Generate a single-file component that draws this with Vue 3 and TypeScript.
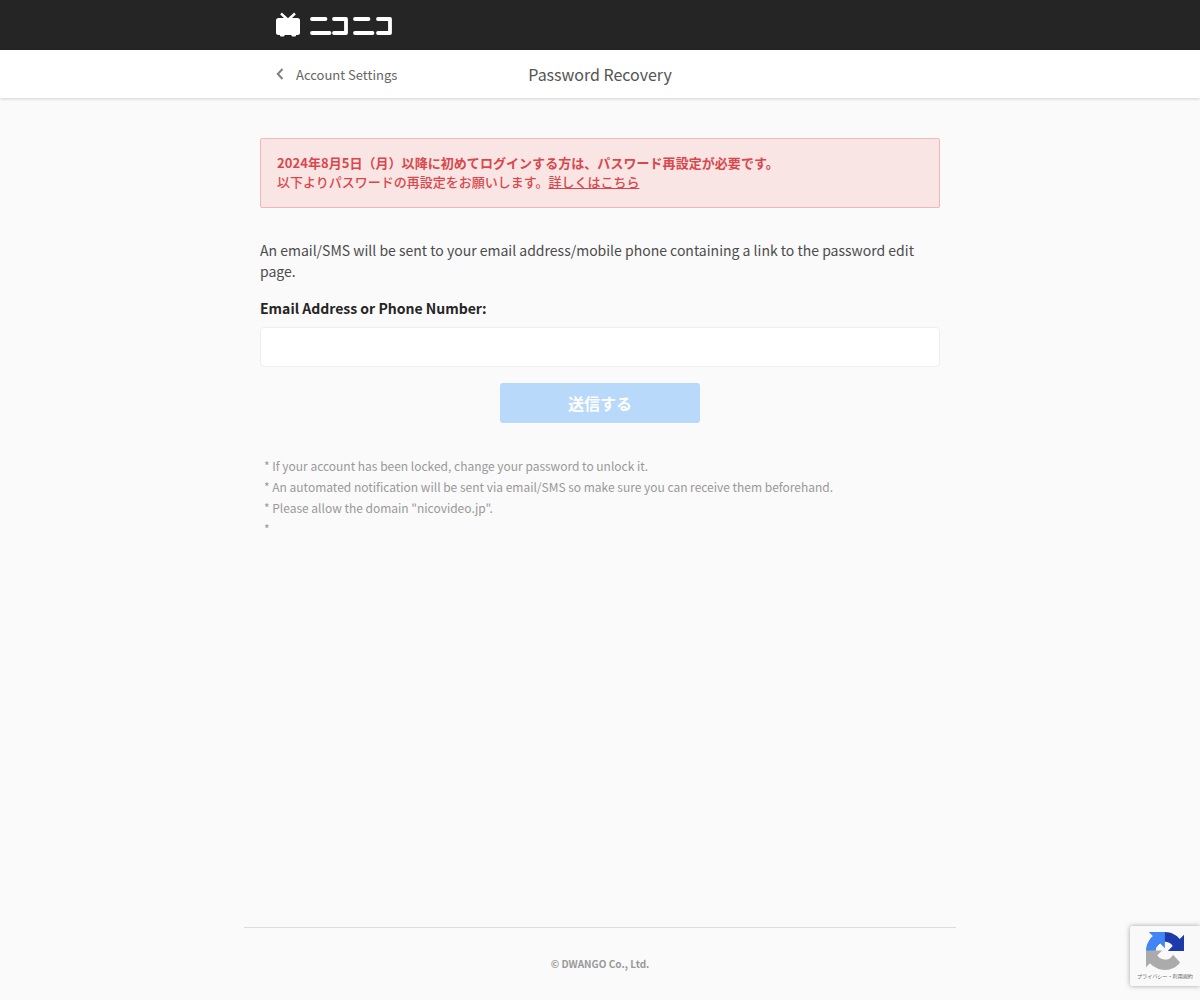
<script setup lang="ts">
const notes: string[] = [
  '* If your account has been locked, change your password to unlock it.',
  '* An automated notification will be sent via email/SMS so make sure you can receive them beforehand.',
  '* Please allow the domain "nicovideo.jp".',
  '*',
]
</script>

<template>
  <div class="page">
    <header class="top">
      <div class="top-inner">
        <svg class="logo" width="118" height="26" viewBox="0 0 118 26" aria-label="niconico">
          <path d="M5 1.5 L11.5 7.5 M19 1.5 L12.5 7.5" stroke="#fff" stroke-width="2.4" fill="none" />
          <rect x="0" y="6" width="24" height="17" rx="2.5" fill="#fff" />
          <rect x="4" y="22" width="4.5" height="2.6" rx="1" fill="#fff" />
          <rect x="15.5" y="22" width="4.5" height="2.6" rx="1" fill="#fff" />
          <g stroke="#fff" stroke-width="3.8" fill="none" stroke-linecap="round" stroke-linejoin="round">
            <path d="M36 7 H49.5 M36 21 H53.5" />
            <path d="M58 7 H70 V21 H58" />
            <path d="M79 7 H92.5 M79 21 H96.5" />
            <path d="M102 7 H114 V21 H102" />
          </g>
        </svg>
      </div>
    </header>

    <nav class="sub">
      <div class="sub-inner">
        <a class="back">
          <svg width="8" height="12" viewBox="0 0 8 12"><path d="M6.5 1 L1.8 6 L6.5 11" stroke="#808080" stroke-width="2" fill="none" /></svg>
          <span>Account Settings</span>
        </a>
        <h1>Password Recovery</h1>
      </div>
    </nav>

    <main class="main">
      <div class="alert">
        <p class="alert-first">2024年8月5日（月）以降に初めてログインする方は、パスワード再設定が必要です。</p>
        <p class="alert-second">以下よりパスワードの再設定をお願いします。<a>詳しくはこちら</a></p>
      </div>
      <p class="lead">An email/SMS will be sent to your email address/mobile phone containing a link to the password edit page.</p>
      <label class="label" for="account">Email Address or Phone Number:</label>
      <input id="account" class="input" type="text" />
      <button class="submit" type="button" disabled>送信する</button>
      <ul class="notes">
        <li v-for="(n, i) in notes" :key="i">{{ n }}</li>
      </ul>
    </main>

    <footer class="foot">
      <div class="foot-inner">© DWANGO Co., Ltd.</div>
    </footer>

    <div class="recaptcha">
      <svg width="38" height="38" viewBox="0 0 64 64">
        <path d="M64 31.955l-.033-1.37V4.687l-7.16 7.16C50.948 4.674 42.033.093 32.05.093c-10.4 0-19.622 4.96-25.458 12.64l11.736 11.86a15.55 15.55 0 0 1 4.754-5.334c2.05-1.6 4.952-2.906 8.968-2.906.485 0 .86.057 1.135.163 4.976.393 9.288 3.14 11.828 7.124l-8.307 8.307c10.522-.04 22.4-.066 27.295.005" fill="#1c3aa9" />
        <path d="M31.9.002l-1.37.033H4.632l7.16 7.16C4.617 13.055.035 21.97.035 31.954c0 10.4 4.96 19.622 12.64 25.458l11.86-11.736a15.55 15.55 0 0 1-5.334-4.754c-1.6-2.05-2.906-4.952-2.906-8.968 0-.485.057-.86.163-1.135.393-4.976 3.14-9.288 7.124-11.828l8.307 8.307c-.04-10.522-.066-22.4.005-27.295" fill="#4285f4" />
        <path d="M.002 32l.033 1.37v25.898l7.16-7.16c5.86 7.173 14.774 11.755 24.76 11.755 10.4 0 19.622-4.96 25.458-12.64L45.677 38.362a15.55 15.55 0 0 1-4.754 5.334c-2.05 1.6-4.952 2.906-8.968 2.906-.485 0-.86-.057-1.135-.163-4.976-.393-9.288-3.14-11.828-7.124l8.307-8.307c-10.522.04-22.4.066-27.295-.005" fill="#ababab" />
      </svg>
      <span>プライバシー・利用規約</span>
    </div>
  </div>
</template>

<style>
html, body { margin: 0; background: #fafafa; }
</style>

<style scoped>
.page {
  min-height: 1000px;
  background: #fafafa;
  display: flex;
  flex-direction: column;
  font-family: "Noto Sans CJK JP", "Noto Sans", sans-serif;
  color: #252525;
  position: relative;
  overflow: hidden;
}
.top { height: 50px; background: #252525; }
.top-inner { width: 648px; margin: 0 auto; padding-top: 12px; box-sizing: border-box; height: 50px; }
.logo { display: block; }
.sub { height: 48px; background: #fff; box-shadow: 0 1px 3px rgba(0, 0, 0, 0.16); }
.sub-inner { width: 680px; height: 48px; margin: 0 auto; display: flex; align-items: center; justify-content: center; position: relative; }
.back { position: absolute; left: 16px; top: 0; height: 48px; display: flex; align-items: center; gap: 12px; font-size: 13px; color: #666; }
h1 { margin: 0; font-size: 16px; font-weight: 400; color: #555; letter-spacing: -0.02px; }
.main { width: 680px; margin: 40px auto 0; flex: 1; }
.alert {
  box-sizing: border-box;
  height: 70px;
  padding: 15px 16px 0;
  background: #fae5e5;
  border: 1px solid #f2b8b8;
  border-radius: 2px;
  color: #d9474c;
  font-size: 13px;
  line-height: 18px;
}
.alert p { margin: 0; }
.alert-first { font-weight: 700; letter-spacing: 0.05px; margin-bottom: 1px !important; }
.alert-second { font-weight: 500; }
.alert a { text-decoration: underline; }
.lead { margin: 32px 0 0; font-size: 14px; line-height: 21px; color: #4c4c4c; }
.label { display: block; margin-top: 16px; font-size: 14px; font-weight: 700; line-height: 21px; color: #252525; }
.input {
  display: block;
  box-sizing: border-box;
  width: 100%;
  height: 40px;
  margin-top: 8px;
  background: #fff;
  border: 1px solid #eee;
  border-radius: 4px;
  outline: none;
}
.submit {
  display: block;
  width: 200px;
  height: 40px;
  margin: 16px auto 0;
  border: 0;
  border-radius: 3px;
  background: #b8d9fa;
  color: #fff;
  font-family: inherit;
  font-size: 16px;
  font-weight: 700;
  padding: 0;
}
.notes { list-style: none; margin: 32px 0 0; padding: 0 4px; font-size: 12px; line-height: 21px; color: #999; letter-spacing: -0.01px; }
.foot { padding-bottom: 28px; }
.foot-inner {
  width: 712px;
  margin: 0 auto;
  border-top: 1px solid #ddd;
  padding-top: 27px;
  text-align: center;
  font-size: 10px;
  font-weight: 700;
  line-height: 17px;
  color: #999;
}
.recaptcha {
  position: absolute;
  left: 1130px;
  top: 926px;
  width: 70px;
  height: 60px;
  box-sizing: border-box;
  background: #f9f9f9;
  border-radius: 2px 0 0 2px;
  box-shadow: 0 0 5px rgba(0, 0, 0, 0.35);
  display: flex;
  flex-direction: column;
  align-items: center;
  padding-top: 6px;
}
.recaptcha svg { flex: none; }
.recaptcha span { font-size: 6px; color: #666; white-space: nowrap; line-height: 8px; margin-top: 2px; transform: scale(0.85); }
</style>
